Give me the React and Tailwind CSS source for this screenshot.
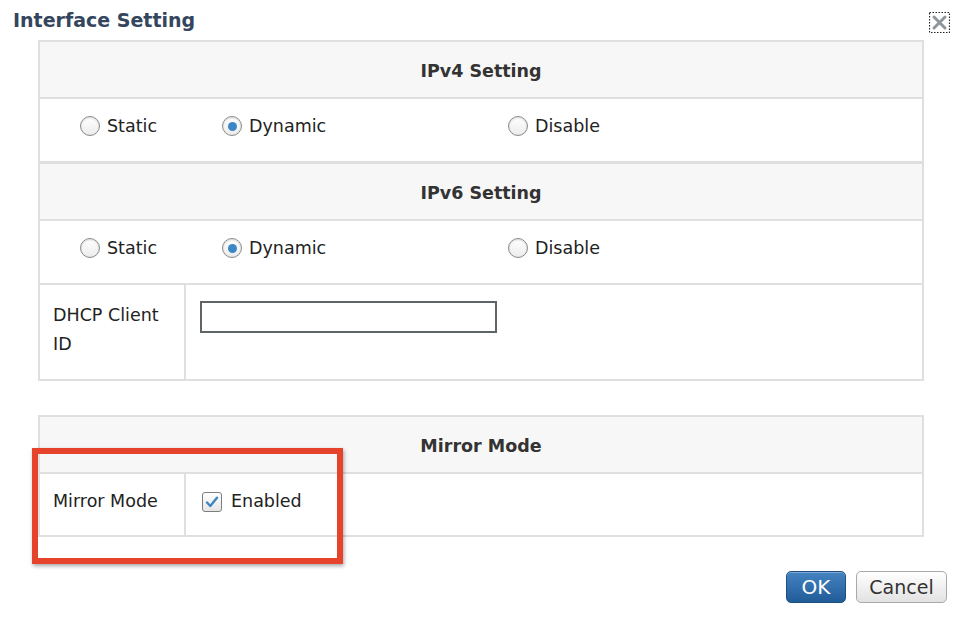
import React from "react";

const font = { fontFamily: '"DejaVu Sans", Verdana, sans-serif' };

function Radio({ checked }) {
  return (
    <span className="relative inline-flex h-[20px] w-[20px] shrink-0 items-center justify-center rounded-full border-[1.5px] border-[#8a8a8a] bg-gradient-to-b from-[#ffffff] to-[#ececec] shadow-[inset_0_1px_2px_rgba(0,0,0,0.15)]">
      {checked && <span className="h-[9px] w-[9px] rounded-full bg-[#3b86c6]" />}
    </span>
  );
}

function RadioRow({ value }) {
  const opts = [
    ["Static", "w-[142px]"],
    ["Dynamic", "w-[286px]"],
    ["Disable", "w-[200px]"],
  ];
  return (
    <div className="flex h-[62px] items-center pb-[8px] pl-[40px] text-[17.5px] text-[#222]">
      {opts.map(([label, w]) => (
        <div key={label} className={`flex items-center gap-[7px] ${w}`}>
          <Radio checked={label === value} />
          <span>{label}</span>
        </div>
      ))}
    </div>
  );
}

function Header({ children }) {
  return (
    <div className="flex h-[55px] items-center justify-center bg-[#f7f7f7] pt-[3px] text-[17.5px] font-bold text-[#333]">
      {children}
    </div>
  );
}

export default function App() {
  return (
    <div className="relative h-[617px] w-[960px] overflow-hidden bg-white" style={font}>
      <div className="flex items-start justify-between pl-[13px] pr-[10px] pt-[6px]">
        <h1 className="text-[19px] font-bold leading-[28px] text-[#34465d]">Interface Setting</h1>
        <svg width="21" height="21" viewBox="0 0 21 21" className="mt-[6px]">
          <rect x="0.5" y="0.5" width="20" height="20" fill="none" stroke="#222" strokeWidth="1.2" strokeDasharray="1.5 1.5" />
          <path d="M5 5 L16 16 M16 5 L5 16" stroke="#8e969c" strokeWidth="3" strokeLinecap="round" />
        </svg>
      </div>

      <div className="ml-[38px] mt-[6px] w-[886px] border-2 border-[#dfdfdf]">
        <Header>IPv4 Setting</Header>
        <div className="border-t-2 border-[#dfdfdf]">
          <RadioRow value="Dynamic" />
        </div>
        <div className="border-t-[3px] border-[#dfdfdf]">
          <Header>IPv6 Setting</Header>
        </div>
        <div className="border-t-2 border-[#dfdfdf]">
          <RadioRow value="Dynamic" />
        </div>
        <div className="flex h-[96px] border-t-2 border-[#dfdfdf]">
          <div className="w-[146px] border-r-2 border-[#dfdfdf] pl-[13px] pt-[16px] text-[17.5px] leading-[29px] text-[#222]">
            DHCP Client
            <br />
            ID
          </div>
          <div className="pl-[14px] pt-[16px]">
            <div className="h-[32px] w-[297px] border-2 border-[#5f6466] bg-white" />
          </div>
        </div>
      </div>

      <div className="ml-[38px] mt-[34px] w-[886px] border-2 border-[#dfdfdf]">
        <Header>Mirror Mode</Header>
        <div className="flex h-[63px] border-t-2 border-[#dfdfdf]">
          <div className="flex w-[146px] items-center border-r-2 border-[#dfdfdf] pb-[6px] pl-[13px] text-[17.5px] text-[#222]">
            Mirror Mode
          </div>
          <div className="flex items-center gap-[9px] pb-[6px] pl-[16px] text-[17.5px] text-[#222]">
            <span className="flex h-[20px] w-[20px] items-center justify-center rounded-[3px] border-[1.5px] border-[#7d7d7d] bg-gradient-to-b from-[#ffffff] to-[#e6e6e6]">
              <svg width="14" height="12" viewBox="0 0 14 12">
                <path d="M2 6.5 L5.3 10 L12 1.8" fill="none" stroke="#3d86c4" strokeWidth="2.4" strokeLinecap="round" strokeLinejoin="round" />
              </svg>
            </span>
            <span>Enabled</span>
          </div>
        </div>
      </div>

      <div className="mt-[34px] flex justify-end gap-[10px] pr-[13px]">
        <button className="h-[32px] w-[60px] rounded-[5px] border border-[#1d4f82] bg-gradient-to-b from-[#4583c1] to-[#1f5c98] text-[20px] text-white shadow-[inset_0_1px_0_rgba(255,255,255,0.3)]">
          OK
        </button>
        <button className="h-[32px] w-[91px] rounded-[5px] border border-[#a9a9a9] bg-gradient-to-b from-[#ffffff] to-[#e2e2e2] text-[19px] text-[#333]">
          Cancel
        </button>
      </div>

      <div className="pointer-events-none absolute left-[32px] top-[448px] h-[116px] w-[311px] border-[6px] border-[#e5432c] shadow-[1px_2px_4px_rgba(0,0,0,0.35)]" />
    </div>
  );
}
